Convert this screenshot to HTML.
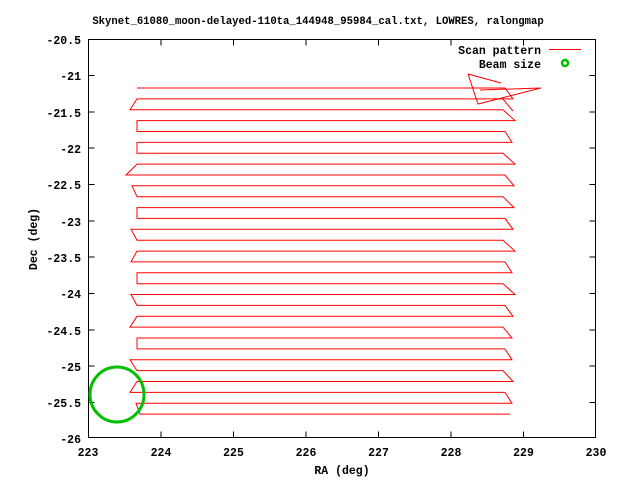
<!DOCTYPE html>
<html><head><meta charset="utf-8"><style>
html,body{margin:0;padding:0;background:#fff;}
svg{display:block;}
text{font-family:"Liberation Mono","DejaVu Sans Mono",monospace;font-weight:bold;font-size:11.5px;fill:#000;}
text.t{font-size:10.6px;}
</style></head><body>
<svg width="640" height="480" viewBox="0 0 640 480" xmlns="http://www.w3.org/2000/svg">
<text class="t" x="318" y="24" text-anchor="middle">Skynet_61080_moon-delayed-110ta_144948_95984_cal.txt, LOWRES, ralongmap</text>
<rect x="88.5" y="39.5" width="507" height="398" fill="none" stroke="#000" stroke-width="1"/>
<g stroke="#000" stroke-width="1">
<path d="M161 39.5v6M233.5 39.5v6M306 39.5v6M378.5 39.5v6M451 39.5v6M523.5 39.5v6
M161 437.5v-6M233.5 437.5v-6M306 437.5v-6M378.5 437.5v-6M451 437.5v-6M523.5 437.5v-6
M88.5 75.5h6M88.5 112h6M88.5 148h6M88.5 184.5h6M88.5 221h6M88.5 257h6M88.5 293.5h6M88.5 330h6M88.5 366h6M88.5 402.5h6
M595.5 75.5h-6M595.5 112h-6M595.5 148h-6M595.5 184.5h-6M595.5 221h-6M595.5 257h-6M595.5 293.5h-6M595.5 330h-6M595.5 366h-6M595.5 402.5h-6"/>
</g>
<g text-anchor="end">
<text x="81" y="44">-20.5</text><text x="81" y="80">-21</text><text x="81" y="117">-21.5</text>
<text x="81" y="153">-22</text><text x="81" y="189">-22.5</text><text x="81" y="226">-23</text>
<text x="81" y="262">-23.5</text><text x="81" y="298">-24</text><text x="81" y="335">-24.5</text>
<text x="81" y="371">-25</text><text x="81" y="407">-25.5</text><text x="81" y="443">-26</text>
</g>
<g text-anchor="middle">
<text x="88" y="456">223</text><text x="161" y="456">224</text><text x="233.5" y="456">225</text>
<text x="306" y="456">226</text><text x="378.5" y="456">227</text><text x="451" y="456">228</text>
<text x="523.5" y="456">229</text><text x="596" y="456">230</text>
<text x="342" y="474">RA (deg)</text>
<text x="0" y="0" transform="translate(37,239) rotate(-90)">Dec (deg)</text>
</g>
<text x="541" y="54" text-anchor="end">Scan pattern</text>
<text x="541" y="68" text-anchor="end">Beam size</text>
<line x1="549" y1="49.5" x2="581" y2="49.5" stroke="#f00" stroke-width="1"/>
<circle cx="565" cy="63" r="3" fill="none" stroke="#00c000" stroke-width="2.5"/>
<g fill="none" stroke="#f00" stroke-width="1">
<polyline points="137,88 505,88 513,98.9 137,98.9 130,109.7 503,109.7 515,120.6 137,120.6 137,131.5 505,131.5 512,142.4 137,142.4 137,153.2 503,153.2 515,164.1 137,164.1 126,175 505,175 514,185.8 132,185.8 137,196.7 503,196.7 514,207.6 137,207.6 137,218.4 505,218.4 513,229.3 131,229.3 137,240.2 503,240.2 515,251.1 137,251.1 131,261.9 505,261.9 512,272.8 137,272.8 137,283.7 503,283.7 515,294.5 131,294.5 137,305.4 505,305.4 513,316.3 137,316.3 130,327.1 503,327.1 512,338 137,338 137,348.9 505,348.9 512,359.8 130,359.8 137,370.6 503,370.6 513,381.5 137,381.5 130,392.4 505,392.4 512,403.2 136,403.2 140,414.1 510,414.1"/>
<path d="M468 74 L501 83 M468 74 L478 104 L541 88 L480 90 M478 104 L502 98 L513 111"/>
</g>
<ellipse cx="117" cy="394.5" rx="27" ry="27.5" fill="none" stroke="#00c000" stroke-width="3"/>
</svg>
</body></html>
